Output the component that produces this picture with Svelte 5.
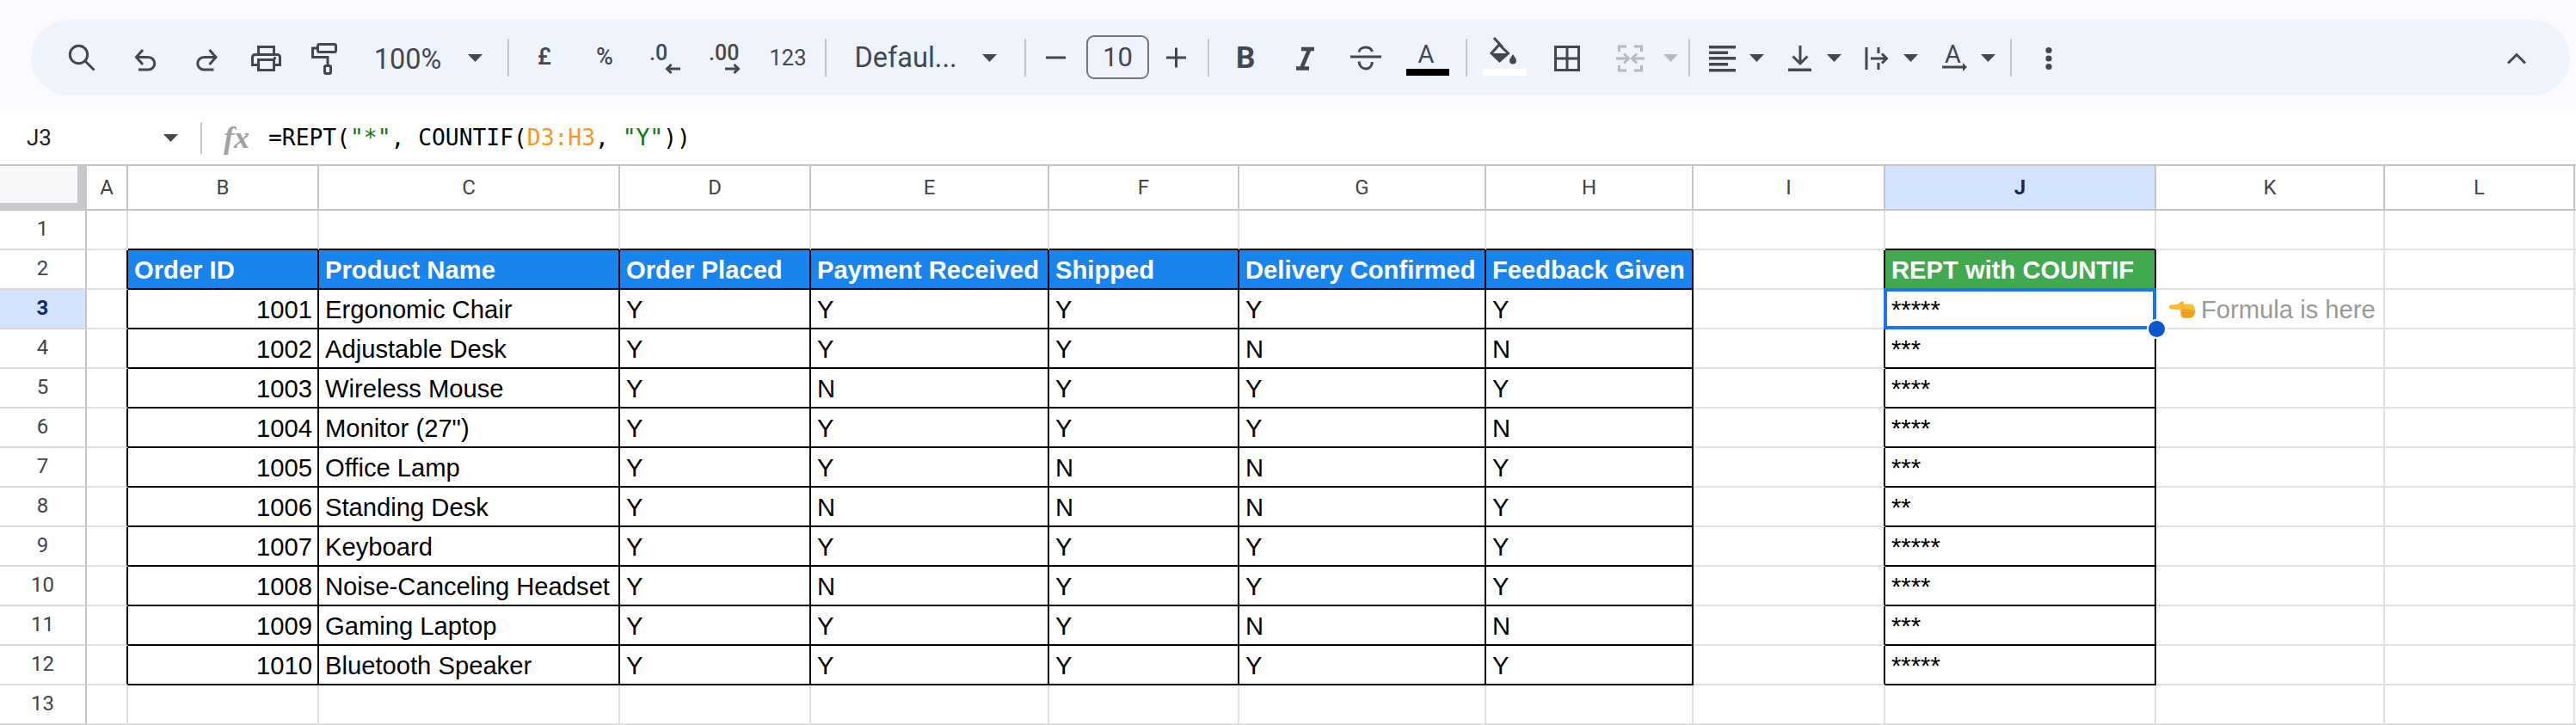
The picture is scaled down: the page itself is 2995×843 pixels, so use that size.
<script>
  const raw = [
    { x: 78, w: 34, s: 'M99 71L109.5 81.5', c: [[91.5, 63.5, 10.2, 's']] },
    { x: 155, w: 30, s: 'M166 58L158.5 66.5L166 75M158.5 66.5H172.5A7.2 7.2 0 0 1 172.5 81H161' },
    { x: 224, w: 30, s: 'M243.5 58L251 66.5L243.5 75M251 66.5H237A7.2 7.2 0 0 0 237 81H248.5' },
    { x: 290, w: 39, s: 'M300.5 62V54.5H318.5V62M299 75.5H293.5V66.5A3 3 0 0 1 296.5 63.5H322.5A3 3 0 0 1 325.5 66.5V75.5H320M300.5 69.5H318.5V81.5H300.5Z', c: [[319.5, 67.5, 1.7, 'f']] },
    { x: 360, w: 34, s: 'M371.5 51.5H388.5A2 2 0 0 1 390.5 53.5V58.5A2 2 0 0 1 388.5 60.5H371.5A2 2 0 0 1 369.5 58.5V53.5A2 2 0 0 1 371.5 51.5ZM369 56H363.5V66.5H381V76M379 76.5H383A1.5 1.5 0 0 1 384.5 78V84A1.5 1.5 0 0 1 383 85.5H379A1.5 1.5 0 0 1 377.5 84V78A1.5 1.5 0 0 1 379 76.5Z' },
    { x: 430, w: 88, label: '100%', cls: 'big low' },
    { x: 543, w: 20, f: 'M544 63H561L552.5 72Z' },
    { x: 590, w: 2, sep: true },
    { x: 615, w: 36, label: '£', cls: 'mid' },
    { x: 685, w: 36, label: '%', cls: 'mid' },
    { x: 753, w: 40, s: 'M791 80H776M780.5 75L775.5 80L780.5 85', t: [[755, 70, '.0']] },
    { x: 822, w: 42, s: 'M843 80H858M853.5 75L858.5 80L853.5 85', t: [[824, 70, '.00']] },
    { x: 893, w: 46, label: '123', cls: 'small' },
    { x: 959, w: 2, sep: true },
    { x: 990, w: 126, label: 'Defaul...', cls: 'big' },
    { x: 1141, w: 20, f: 'M1142 63H1159L1150.5 72Z' },
    { x: 1191, w: 2, sep: true },
    { x: 1214, w: 28, s: 'M1216 67H1239' },
    { x: 1263, w: 73, label: '10', cls: 'big box' },
    { x: 1354, w: 28, s: 'M1356 67H1379M1367.5 55.5V78.5' },
    { x: 1404, w: 2, sep: true },
    { x: 1434, w: 28, t: [[1437, 79, 'B', 'bold']] },
    { x: 1504, w: 28, s: 'M1513 57H1528M1507 79.5H1522M1522.5 57L1513 79.5', sw: 4.5 },
    { x: 1568, w: 40, s: 'M1570 66H1606M1580 60.5C1580.5 57 1584 55 1588 55C1592 55 1594.5 57 1595.5 60M1580 71.5C1580.5 77 1584 80 1588 80C1592 80 1595 77 1595.5 72' },
    { x: 1633, w: 54, t: [[1648.5, 73, 'A', 'reg']], r: [[1635, 80, 50, 8, '#000']] },
    { x: 1704, w: 2, sep: true },
    { x: 1722, w: 55, s: 'M1743 52L1753.5 62L1743.5 71L1734 62ZM1737 44L1747 55', f: 'M1734 62H1753.5L1743.5 71ZM1759 63C1761 66.5 1763 68.5 1763 70.5A4 4 0 0 1 1755 70.5C1755 68.5 1757 66.5 1759 63Z', r: [[1724, 80, 51, 8, '#fff']] },
    { x: 1805, w: 34, s: 'M1808.5 54.5H1835.5V81.5H1808.5ZM1822 54.5V81.5M1808.5 68H1835.5' },
    { x: 1877, w: 37, dim: true, s: 'M1891 54H1882.5V60M1882.5 76V82H1891M1900 54H1908.5V60M1908.5 76V82H1900M1879 68H1893M1888 62.5L1893.5 68L1888 73.5M1912 68H1898M1903 62.5L1897.5 68L1903 73.5' },
    { x: 1933, w: 20, dim: true, f: 'M1934 63H1951L1942.5 72Z' },
    { x: 1963, w: 2, sep: true },
    { x: 1985, w: 35, f: 'M1987 53H2018V56.5H1987ZM1987 59.5H2009V63H1987ZM1987 66H2018V69.5H1987ZM1987 73H2009V76.5H1987ZM1987 80H2018V83.5H1987Z' },
    { x: 2033, w: 20, f: 'M2034 63H2051L2042.5 72Z' },
    { x: 2077, w: 31, s: 'M2093 53V74M2084.5 65.5L2093 74L2101.5 65.5', f: 'M2079 79.5H2106V83H2079Z' },
    { x: 2123, w: 20, f: 'M2124 63H2141L2132.5 72Z' },
    { x: 2166, w: 31, s: 'M2170 55V81M2184 55V62M2184 73V81M2175 68H2193M2188 62.5L2193.5 68L2188 73.5' },
    { x: 2212, w: 20, f: 'M2213 63H2230L2221.5 72Z' },
    { x: 2256, w: 33, s: 'M2258 78H2283', f: 'M2282 73L2287 78L2282 83Z', t: [[2261, 73, 'A', 'reg']] },
    { x: 2302, w: 20, f: 'M2303 63H2320L2311.5 72Z' },
    { x: 2337, w: 2, sep: true },
    { x: 2376, w: 12, c: [[2382, 58.5, 3.6, 'f'], [2382, 68, 3.6, 'f'], [2382, 77.5, 3.6, 'f']] },
    { x: 2913, w: 26, s: 'M2916 73.5L2926 63.5L2936 73.5' }
  ];
  const items = raw.map((it, i) => ({
    ...it,
    gap: it.x - (i ? raw[i - 1].x + raw[i - 1].w : 36)
  }));

  const columns = [
    { n: 'A', w: 48 }, { n: 'B', w: 222 }, { n: 'C', w: 350 }, { n: 'D', w: 222 },
    { n: 'E', w: 277 }, { n: 'F', w: 221 }, { n: 'G', w: 287 }, { n: 'H', w: 241 },
    { n: 'I', w: 223 }, { n: 'J', w: 315 }, { n: 'K', w: 266 }, { n: 'L', w: 221 }
  ];
  const gridCols = '101px ' + columns.map((c) => c.w + 'px').join(' ') + ' 1fr';

  const head = ['Order ID', 'Product Name', 'Order Placed', 'Payment Received', 'Shipped', 'Delivery Confirmed', 'Feedback Given'];
  const data = [
    [1001, 'Ergonomic Chair', 'Y', 'Y', 'Y', 'Y', 'Y', '*****'],
    [1002, 'Adjustable Desk', 'Y', 'Y', 'Y', 'N', 'N', '***'],
    [1003, 'Wireless Mouse', 'Y', 'N', 'Y', 'Y', 'Y', '****'],
    [1004, 'Monitor (27")', 'Y', 'Y', 'Y', 'Y', 'N', '****'],
    [1005, 'Office Lamp', 'Y', 'Y', 'N', 'N', 'Y', '***'],
    [1006, 'Standing Desk', 'Y', 'N', 'N', 'N', 'Y', '**'],
    [1007, 'Keyboard', 'Y', 'Y', 'Y', 'Y', 'Y', '*****'],
    [1008, 'Noise-Canceling Headset', 'Y', 'N', 'Y', 'Y', 'Y', '****'],
    [1009, 'Gaming Laptop', 'Y', 'Y', 'Y', 'N', 'N', '***'],
    [1010, 'Bluetooth Speaker', 'Y', 'Y', 'Y', 'Y', 'Y', '*****']
  ];

  function text(row, ci) {
    if (row === 2) return ci >= 1 && ci <= 7 ? head[ci - 1] : ci === 9 ? 'REPT with COUNTIF' : '';
    if (row >= 3 && row <= 12) {
      const d = data[row - 3];
      if (ci >= 1 && ci <= 7) return d[ci - 1];
      if (ci === 9) return d[7];
    }
    return '';
  }
  function cls(row, ci) {
    const inTable = ci >= 1 && ci <= 7;
    const out = [];
    const body = row >= 2 && row <= 12;
    if (body && (inTable || ci === 9)) out.push('black-r', 'black-b');
    if (body && (ci === 0 || ci === 8)) out.push('black-r');
    if (row === 1 && (inTable || ci === 9)) out.push('black-b');
    if (row === 2 && inTable) out.push('th-blue');
    if (row === 2 && ci === 9) out.push('th-green');
    if (row >= 3 && row <= 12 && ci === 1) out.push('num');
    return out.join(' ');
  }
  const rows = Array.from({ length: 13 }, (_, i) => i + 1);
</script>

<div class="page">
  <header class="top">
    <div class="toolbar">
      {#each items as it}
        <div class="item" class:dim={it.dim} style="margin-left:{it.gap}px;width:{it.w}px">
          {#if it.sep}
            <span class="sep"></span>
          {:else if it.label}
            <span class="label {it.cls}">{it.label}</span>
          {:else}
            <svg width={it.w} height="88" viewBox="{it.x} 23 {it.w} 88">
              {#if it.r}
                {#each it.r as q}<rect x={q[0]} y={q[1]} width={q[2]} height={q[3]} fill={q[4]} />{/each}
              {/if}
              {#if it.f}<path class="fl" d={it.f} />{/if}
              {#if it.s}<path class="st" d={it.s} stroke-width={it.sw || 3} />{/if}
              {#if it.c}
                {#each it.c as q}
                  <circle cx={q[0]} cy={q[1]} r={q[2]} class={q[3] === 's' ? 'st' : 'fl'} stroke-width="3" />
                {/each}
              {/if}
              {#if it.t}
                {#each it.t as q}<text x={q[0]} y={q[1]} class={q[3] || 'dec'}>{q[2]}</text>{/each}
              {/if}
            </svg>
          {/if}
        </div>
      {/each}
    </div>
  </header>

  <div class="formula">
    <span class="name">J3</span>
    <svg class="ncaret" width="17" height="9" viewBox="0 0 17 9"><path d="M0 0H17L8.5 9Z" /></svg>
    <span class="fsep"></span>
    <span class="fx">fx</span>
    <span class="ftext">=REPT(<span class="g">"*"</span>, COUNTIF(<span class="o">D3:H3</span>, <span class="g">"Y"</span>))</span>
  </div>

  <div class="sheet" style="grid-template-columns:{gridCols}">
    <div class="corner"></div>
    {#each columns as c}
      <div class="ch" class:sel-h={c.n === 'J'}>{c.n}</div>
    {/each}
    <div class="ch end"></div>

    {#each rows as r}
      <div class="rh" class:sel-h={r === 3}>{r}</div>
      {#each columns as c, ci}
        <div class="cell {cls(r, ci)}">
          {#if r === 3 && c.n === 'J'}
            <div class="selection"><span class="handle"></span></div>
          {/if}
          {#if r === 3 && c.n === 'K'}
            <svg class="hand" width="30" height="20" viewBox="0 0 30 20">
              <path d="M10 4.5C11 2 14 0 16.5 0.5C17.5 1 17 3 16.5 5Z" fill="#fbb62f" />
              <path d="M1.5 4.5L14 3.5H24C28 3.5 30 7 30 11.5C30 17 27 20 22 20H18C15 20 13 17 13 14V10.5L2 9.5C-0.5 9 -0.5 5 1.5 4.5Z" fill="#fcbb32" />
              <path d="M15 11H30C30 17 27 20 22 20H18C15 20 14 15 15 11Z" fill="#f6a31f" />
              <path d="M14.5 10.5H25M14.5 14H26M15.5 17H26" stroke="#e58d17" stroke-width="0.8" fill="none" />
            </svg>
            <span class="note">Formula is here</span>
          {:else}
            {text(r, ci)}
          {/if}
        </div>
      {/each}
      <div class="cell end"></div>
    {/each}
  </div>
</div>

<style>
  :global(body) {
    margin: 0;
    background: #fff;
    overflow: hidden;
  }
  .page {
    width: 2995px;
    height: 843px;
    overflow: hidden;
    display: flex;
    flex-direction: column;
    font-family: 'Liberation Sans', Arial, sans-serif;
  }
  .top {
    height: 129px;
    flex: none;
    box-sizing: border-box;
    background: #fbfbff;
    padding: 23px 7px 18px 36px;
  }
  .toolbar {
    height: 88px;
    border-radius: 44px;
    background: #eff3fb;
    display: flex;
    align-items: center;
  }
  .item {
    flex: none;
    height: 88px;
    display: flex;
    align-items: center;
    justify-content: center;
    font-family: Roboto, sans-serif;
    color: #44474e;
  }
  .item svg { display: block; }
  .sep {
    width: 2px;
    height: 44px;
    background: #c5c7c9;
  }
  .st { fill: none; stroke: #44474e; }
  .fl { fill: #44474e; stroke: none; }
  .dim .st { stroke: #b6b9bf; }
  .dim .fl { fill: #b6b9bf; }
  .dec { font: 500 25px Roboto, sans-serif; fill: #44474e; }
  .bold { font: 700 35px Roboto, sans-serif; fill: #44474e; }
  .reg { font: 400 29px Roboto, sans-serif; fill: #44474e; }
  .label { white-space: nowrap; }
  .big { font-size: 32.5px; line-height: 40px; }
  .low { padding-top: 3px; }
  .mid { font-size: 27px; padding-bottom: 2px; font-weight: 500; }
  .small { font-size: 25.5px; }
  .box {
    box-sizing: border-box;
    width: 73px;
    height: 51px;
    border: 2px solid #72767d;
    border-radius: 9px;
    display: flex;
    align-items: center;
    justify-content: center;
    margin-top: -1px;
    font-size: 31px;
  }

  .formula {
    height: 62px;
    flex: none;
    box-sizing: border-box;
    display: flex;
    align-items: center;
    background: #fff;
    padding-left: 31px;
    color: #000;
  }
  .name { font: 400 26px Roboto, sans-serif; width: 159px; flex: none; color: #1f1f1f; }
  .ncaret { flex: none; fill: #444746; }
  .fsep { width: 2px; height: 37px; background: #c7c7c7; margin-left: 26px; flex: none; }
  .fx {
    font: italic 700 36px 'Liberation Serif', serif;
    color: #a0a0a0;
    margin-left: 25px;
    width: 52px;
    flex: none;
  }
  .ftext {
    font: 400 26.3px 'DejaVu Sans Mono', monospace;
    white-space: pre;
    color: #000;
  }
  .g { color: #0a7a0a; }
  .o { color: #f7981d; }

  .sheet {
    flex: 1;
    display: grid;
    grid-template-rows: 52px repeat(13, 46px);
    border-top: 2px solid #c4c4c4;
    background: #fff;
  }
  .corner {
    box-sizing: border-box;
    background: #f8f8fb;
    border-right: 11px solid #c8c8cc;
    border-bottom: 9px solid #c8c8cc;
  }
  .ch {
    box-sizing: border-box;
    border-right: 2px solid #c4c4c4;
    border-bottom: 2px solid #c4c4c4;
    display: flex;
    align-items: center;
    justify-content: center;
    font: 400 24px Roboto, sans-serif;
    color: #444;
  }
  .ch.end { border-right: 0; }
  .rh {
    box-sizing: border-box;
    border-right: 2px solid #c4c4c4;
    border-bottom: 2px solid #d9d9d9;
    display: flex;
    align-items: center;
    justify-content: center;
    padding-bottom: 3px;
    font: 400 24px Roboto, sans-serif;
    color: #444;
  }
  .sel-h {
    background: #d3e3fd;
    color: #0b2a6b;
    font-weight: 700;
  }
  .cell {
    box-sizing: border-box;
    border-right: 2px solid #e1e1e1;
    border-bottom: 2px solid #e1e1e1;
    display: flex;
    align-items: flex-end;
    padding: 0 2px 4px 7px;
    font-size: 29.2px;
    line-height: 34px;
    color: #000;
    white-space: nowrap;
    position: relative;
  }
  .cell.end { border-right: 0; }
  .black-r { border-right-color: #000; }
  .black-b { border-bottom-color: #000; }
  .num { justify-content: flex-end; padding-right: 6px; }
  .th-blue { background: #1a84ee; color: #fff; font-weight: 700; }
  .th-green { background: #41a94f; color: #fff; font-weight: 700; }
  .selection {
    position: absolute;
    inset: -2px;
    border: 4px solid #1a73f0;
    z-index: 2;
  }
  .handle {
    position: absolute;
    right: -15.5px;
    bottom: -14.5px;
    width: 19px;
    height: 19px;
    border: 2px solid #fff;
    border-radius: 50%;
    background: #0b57d0;
  }
  .hand { flex: none; margin: 0 7px 7px 8px; }
  .note { color: #999; }
</style>
